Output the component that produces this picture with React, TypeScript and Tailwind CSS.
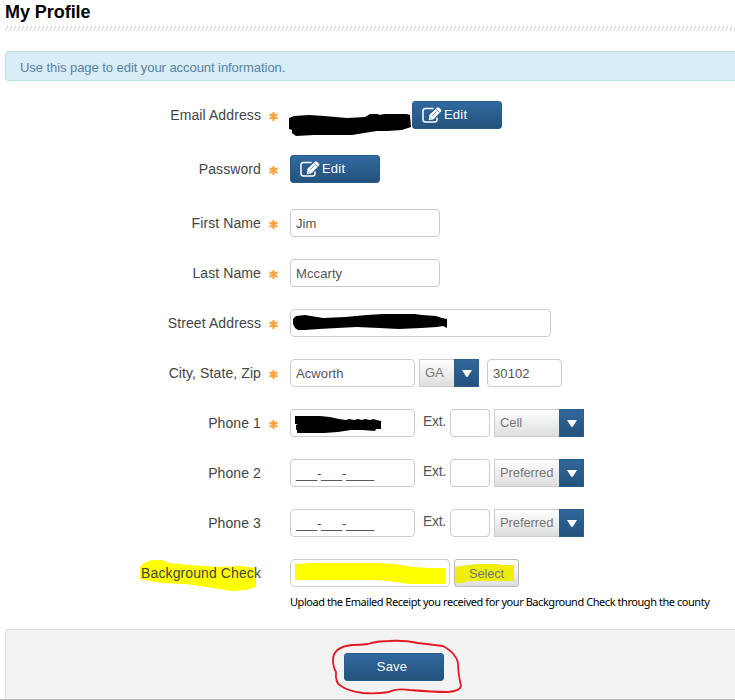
import type { ReactNode } from 'react';
import clsx from 'clsx';

interface FieldRowProps {
  label: ReactNode;
  required?: boolean;
  className?: string;
  children: ReactNode;
}

function RequiredMark() {
  return (
    <svg className="h-[9px] w-[9px]" viewBox="0 0 9 9" stroke="#f9a541" strokeWidth="2.3" strokeLinecap="round">
      <path d="M4.5 1.1v6.8M1.4 2.8l6.2 3.4M7.6 2.8L1.4 6.2" />
    </svg>
  );
}

function FieldRow({ label, required = false, className, children }: FieldRowProps) {
  return (
    <div className={clsx('flex h-7 items-center', className)}>
      <div className="w-[261px] text-right text-[14px] leading-5 tracking-[0.1px] whitespace-nowrap text-[#444]">{label}</div>
      <div className="mt-[2px] flex w-[29px] pl-2">{required && <RequiredMark />}</div>
      {children}
    </div>
  );
}

function TextBox({ value, className, children }: { value?: string; className?: string; children?: ReactNode }) {
  return (
    <div
      className={clsx(
        'relative flex h-7 shrink-0 items-center rounded border border-[#ccc] bg-white pt-px pl-[5px] text-[13px] tracking-[0.1px] text-[#555]',
        className
      )}
    >
      {value}
      {children}
    </div>
  );
}

function Dropdown({ value, className }: { value: string; className?: string }) {
  return (
    <div className={clsx('flex h-7 shrink-0', className)}>
      <div className="flex-1 border border-r-0 border-[#ccc] bg-linear-to-b from-white to-[#dedede] pl-[5px] text-[13px] leading-[25px] tracking-[-0.1px] text-[#777]">
        {value}
      </div>
      <div className="flex w-[25px] items-center justify-center border border-[#2a5e8e] bg-linear-to-b from-[#31689c] to-[#24527d]">
        <svg className="mt-px h-[7px] w-[10px]" viewBox="0 0 10 7" fill="#fff">
          <path d="M0 0h10L5.8 6.8H4.2z" />
        </svg>
      </div>
    </div>
  );
}

function EditButton() {
  return (
    <button className="flex h-7 w-[90px] shrink-0 items-center rounded-[3px] border border-[#285c8b] bg-linear-to-b from-[#31699f] to-[#24527d] pl-[9px] text-[13px] text-white">
      <svg className="h-4 w-[20px]" viewBox="0 0 20 16" fill="none">
        <path d="M11.5 1.6H3.5Q1 1.6 1 4.1v8.4Q1 15 3.5 15h9q2.5 0 2.5-2.5v-2" stroke="#fff" strokeWidth="1.5" />
        <path d="M6.7 13.2l.8-5.4L14.9.7q1-.9 2 0l2 1.9q1 1 0 2l-7.3 7.6z" fill="#fff" />
        <path d="M14.1 2.2l3.4 3.3M10.1 8.8l4.4-4.4M8 10.6l1.3 1.3" stroke="#2c6294" strokeWidth=".7" />
      </svg>
      <span className="-mt-px ml-[2px] tracking-[0.2px]">Edit</span>
    </button>
  );
}

function PhoneRow({ label, type, required, children }: { label: string; type: string; required?: boolean; children?: ReactNode }) {
  return (
    <FieldRow label={label} required={required} className="mt-[22px]">
      <TextBox className="w-[125px]">{children ?? <PhoneMask />}</TextBox>
      <span className="-mt-[3px] w-[35px] pl-2 text-[14px] tracking-[-0.3px] text-[#555]">Ext.</span>
      <TextBox className="w-10" />
      <Dropdown value={type} className="ml-1 w-[90px]" />
    </FieldRow>
  );
}

// Blank ___-___-____ mask
function PhoneMask() {
  return <span className="text-[13px] tracking-[-0.25px] text-[#444]">___-___-____</span>;
}

export default function App() {
  return (
    <div className="flex h-[700px] w-[735px] flex-col overflow-hidden bg-white font-['Liberation_Sans',Arial,sans-serif]">
      <h1 className="ml-[5px] h-[26px] pt-px text-[18px] leading-[22px] font-bold tracking-[-0.05px] text-black">My Profile</h1>
      <svg className="ml-[5px] h-[5px] w-[730px] shrink-0">
        <defs>
          <pattern id="hatch" width="4" height="5" patternUnits="userSpaceOnUse">
            <path d="M.8 5L2.6 0" stroke="#cdcdcd" strokeWidth="1" />
          </pattern>
        </defs>
        <rect width="730" height="5" fill="url(#hatch)" />
      </svg>

      <div className="mt-5 ml-[5px] h-[30px] shrink-0 rounded-l border border-r-0 border-[#bce0e8] bg-[#d9edf7] pl-[14px] text-[13px] leading-[31px] tracking-[-0.06px] text-[#5683a4]">
        Use this page to edit your account information.
      </div>

      <div className="mt-5 flex flex-col">
        <FieldRow label="Email Address" required>
          <svg className="mt-[22px] -ml-px h-[24px] w-[123px]" viewBox="0 0 123 24">
            <path d="M0 4L5 2 20 1l15 1 23 2 18-1 5-3 6-1 3 1-1 1 14-2 11 0 7 2 1 12-9 3-15 1-10 0-13 2-12 2H25L7 22l-4-3V16l-3-1z" />
          </svg>
          <EditButton />
        </FieldRow>
        <FieldRow label="Password" required className="mt-[26px]">
          <EditButton />
        </FieldRow>
        <FieldRow label="First Name" required className="mt-[26px]">
          <TextBox value="Jim" className="w-[150px]" />
        </FieldRow>
        <FieldRow label="Last Name" required className="mt-[22px]">
          <TextBox value="Mccarty" className="w-[150px]" />
        </FieldRow>
        <FieldRow label="Street Address" required className="mt-[22px]">
          <TextBox className="w-[261px]">
            <svg className="absolute top-1 left-[2px] h-[18px] w-[155px]" viewBox="0 0 155 18">
              <path d="M0 5l3-3 9-1 18 3 22-1 22-2 16-1 15-1 10 0 14 2 14 1 6 2 5 1v9l-2-1-2-1-6 1-16 1-22 1-20-1-22-1-20 1-18 1-14 1H5l-3-2-2-4z" />
            </svg>
          </TextBox>
        </FieldRow>
        <FieldRow label="City, State, Zip" required className="mt-[22px]">
          <TextBox value="Acworth" className="w-[125px]" />
          <Dropdown value="GA" className="ml-1 w-[60px]" />
          <TextBox value="30102" className="ml-2 w-[75px]" />
        </FieldRow>
        <PhoneRow label="Phone 1" type="Cell" required>
          <svg className="absolute top-[6px] left-1 h-[18px] w-[88px]" viewBox="0 0 88 18">
            <path d="M0 0h25l10 1 9 2 7 1 3-1 5 1 4-1 4 1 3-1 5 1 4-1 2 1 5 1v8h-5l-1 2-13-1H56l-13 2-14 1H2v-3H1V9l2-1H0z" />
          </svg>
        </PhoneRow>
        <PhoneRow label="Phone 2" type="Preferred" />
        <PhoneRow label="Phone 3" type="Preferred" />
        <FieldRow
          className="mt-[22px]"
          label={
            <span className="relative">
              <svg className="absolute -top-[6px] -left-px h-[32px] w-[117px]" viewBox="0 0 117 32">
                <path d="M0 8l4-4 8-3h10l7 3 20 2 30 2 22-1 15 2v19l-10 3-14 1-25-4-22-3-24-1-21-4z" fill="#ff0" />
              </svg>
              <span className="relative">Background Check</span>
            </span>
          }
        >
          <TextBox className="w-40">
            <svg className="absolute top-[3px] left-1 h-[22px] w-[151px]" viewBox="0 0 151 22">
              <path d="M0 1l18-1h66l16 1 18 3 17 1 15 0v16h-36l-14-2-17-2H0z" fill="#ff0" />
            </svg>
          </TextBox>
          <button className="relative ml-1 h-7 w-[65px] rounded-[3px] border border-[#bbb] bg-linear-to-b from-white to-[#dedede] text-[13px] leading-[25px] tracking-[-0.2px] text-[#777]">
            <svg className="absolute top-1 left-0 h-5 w-[60px]" viewBox="0 0 60 20">
              <path d="M0 3l6-1 16-2h20l5 1h12v16H14l-3 1-5 1H0z" fill="#eeee08" />
            </svg>
            <span className="relative">Select</span>
          </button>
        </FieldRow>
      </div>

      <p className="mt-[7px] pl-[290px] font-['Noto_Sans',sans-serif] text-[11px] leading-4 tracking-[-0.445px] whitespace-nowrap text-black">
        Upload the Emailed Receipt you received for your Background Check through the county
      </p>

      <div className="mt-[19px] ml-[5px] flex h-[70px] shrink-0 rounded-tl-[3px] border-t border-l border-[#ddd] bg-[#f3f3f3] pt-[23px] pl-[338px]">
        <div className="relative">
          <button className="h-7 w-[100px] rounded-[3px] border border-[#285c8b] bg-linear-to-b from-[#31699f] to-[#24527d] pr-1 pb-px text-[13px] tracking-[0.2px] text-white">
            Save
          </button>
          <svg className="absolute -top-[14px] -left-[14px] h-[56px] w-[134px]" viewBox="0 0 134 56" fill="none" stroke="#e21b22" strokeWidth="1.8" strokeLinejoin="round">
            <path d="M38 5Q30 6 22 6Q3 8 3 21Q3 28 6 33Q5 44 11 47Q18 52 33 54Q47 55 59 53Q66 49 80 51Q103 53 118 53Q130 52 131 47Q128 34 128 24Q126 14 113 7L88 4Q74 1 59 2Q47 2 38 5z" />
          </svg>
        </div>
      </div>
      <div className="h-px shrink-0 bg-[#bbb]" />
    </div>
  );
}
